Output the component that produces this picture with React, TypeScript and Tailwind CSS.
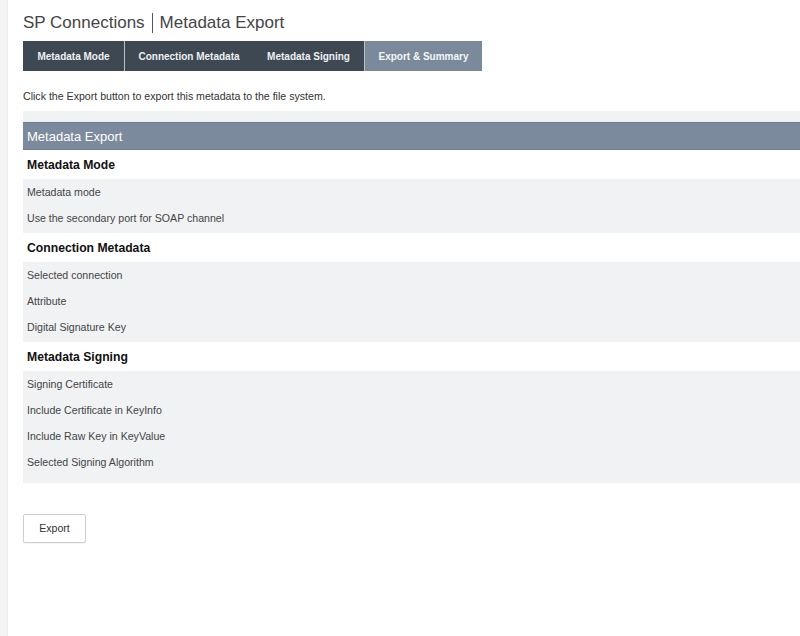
const tabs = [
  { label: "Metadata Mode", w: "w-[102px]", active: false },
  { label: "Connection Metadata", w: "w-[128px]", active: false },
  { label: "Metadata Signing", w: "w-[112px]", active: false },
  { label: "Export & Summary", w: "w-[117px]", active: true },
];

const sections = [
  {
    title: "Metadata Mode",
    rows: ["Metadata mode", "Use the secondary port for SOAP channel"],
  },
  {
    title: "Connection Metadata",
    rows: ["Selected connection", "Attribute", "Digital Signature Key"],
  },
  {
    title: "Metadata Signing",
    rows: [
      "Signing Certificate",
      "Include Certificate in KeyInfo",
      "Include Raw Key in KeyValue",
      "Selected Signing Algorithm",
    ],
  },
];

export default function App() {
  return (
    <div
      className="flex min-h-[636px] w-full bg-white text-[#333]"
      style={{ fontFamily: '"Liberation Sans", Arial, sans-serif' }}
    >
      {/* left gutter */}
      <div className="w-[8px] shrink-0 bg-[#f4f4f4] border-r border-[#ececec]" />

      <div className="flex-1 pl-[15px] pt-[11px]">
        {/* Title */}
        <h1 className="flex items-center h-[24px] text-[17px] text-[#454545] font-normal">
          <span>SP Connections</span>
          <span className="mx-[7px] h-[20px] w-px bg-[#555]" />
          <span>Metadata Export</span>
        </h1>

        {/* Tabs */}
        <div className="mt-[6px] flex h-[30px]">
          {tabs.map((t, i) => (
            <div
              key={t.label}
              className={`${t.w} flex items-center justify-center text-[10px] font-bold ${
                t.active ? "bg-[#7a8a9b] text-[#f4f6f8]" : "bg-[#3d4852] text-[#eef0f2]"
              } ${i === 0 || i === 2 ? "border-r border-[#b9c0c6]" : ""}`}
            >
              {t.label}
            </div>
          ))}
        </div>

        <p className="mt-[18px] text-[10.6px] leading-[14px] text-[#333]">
          Click the Export button to export this metadata to the file system.
        </p>

        {/* Panel */}
        <div className="mt-[8px]">
          <div className="h-[11px] bg-[#f1f2f4]" />
          <div className="h-[28px] flex items-center pl-[4px] pt-[1px] bg-[#7b8a9c] border-y border-[#6e7d8e] text-[13px] text-white">
            Metadata Export
          </div>

          {sections.map((s, si) => (
            <div key={s.title}>
              <div className="h-[29px] flex items-center pl-[4px] pt-[1px] text-[12.2px] font-bold text-[#111]">
                {s.title}
              </div>
              <div
                className={`bg-[#f1f2f4] ${si === sections.length - 1 ? "pb-[8px]" : "pb-[2px]"}`}
              >
                {s.rows.map((r) => (
                  <div key={r} className="h-[26px] flex items-center pl-[4px] pt-[2px] text-[10.6px] text-[#444]">
                    {r}
                  </div>
                ))}
              </div>
            </div>
          ))}
        </div>

        <button className="mt-[31px] w-[63px] h-[29px] bg-white border border-[#cfcfcf] rounded-[2px] text-[10.6px] text-[#333] shadow-[0_1px_1px_rgba(0,0,0,0.05)]">
          Export
        </button>
      </div>
    </div>
  );
}
